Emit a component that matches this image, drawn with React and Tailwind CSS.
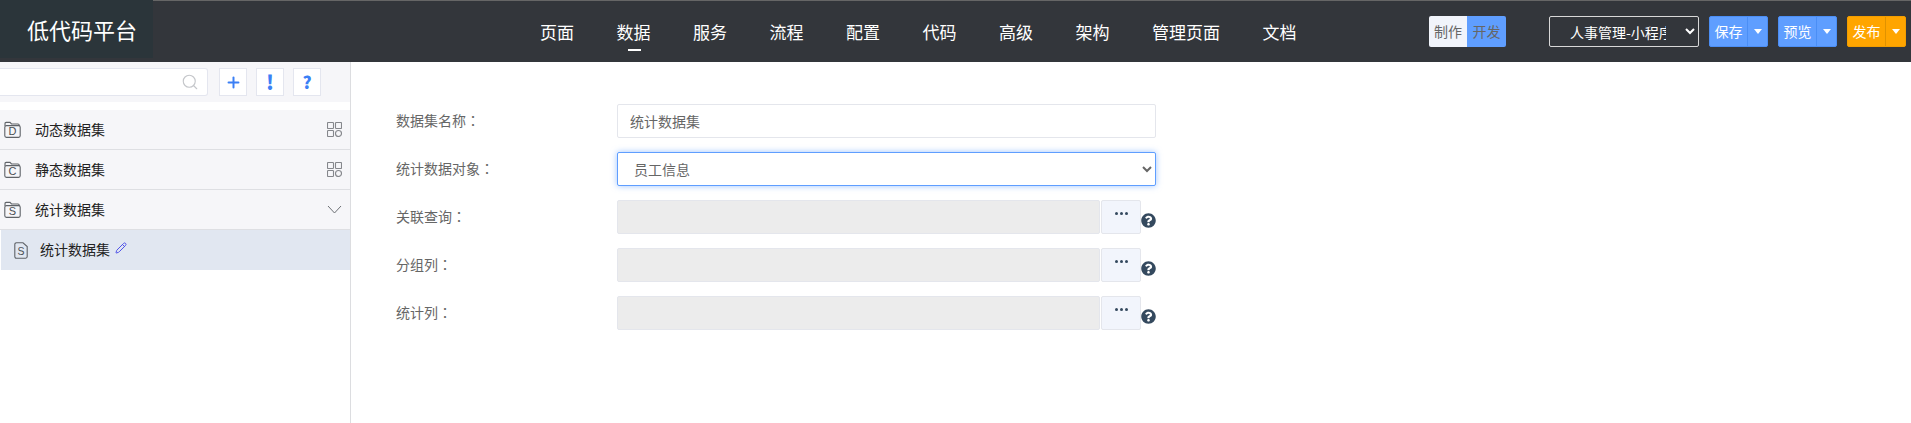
import { Search, Pencil, Plus } from "lucide-react";
import { FaQuestionCircle } from "react-icons/fa";

const NAV = ["页面", "数据", "服务", "流程", "配置", "代码", "高级", "架构", "管理页面", "文档"];
const FONT = "[font-family:'Noto_Sans_CJK_SC','Liberation_Sans',sans-serif]";

function FolderIcon({ letter }) {
  return (
    <svg width="17" height="17" viewBox="0 0 17 17" fill="none" stroke="#5f6368" strokeWidth="1.1">
      <path d="M1 5V2.6C1 1.9 1.5 1.4 2.2 1.4H6l1.5 1.6H14c.7 0 1.2.5 1.2 1.2V5" />
      <rect x="0.8" y="4.6" width="15.4" height="11.8" rx="1.6" />
      <text x="8.5" y="14.2" textAnchor="middle" fontSize="11" fill="#4b4f54" stroke="none" fontFamily="Liberation Sans">{letter}</text>
    </svg>
  );
}

function FileIcon({ letter }) {
  return (
    <svg width="14" height="17" viewBox="0 0 14 17" fill="none" stroke="#5f6368" strokeWidth="1.1">
      <path d="M2.4.8H9l4.2 3.8v10c0 .9-.6 1.6-1.5 1.6H2.4c-.9 0-1.6-.7-1.6-1.6V2.4c0-.9.7-1.6 1.6-1.6Z" />
      <text x="7" y="12.8" textAnchor="middle" fontSize="10.5" fill="#4b4f54" stroke="none" fontFamily="Liberation Sans">{letter}</text>
    </svg>
  );
}

function GridIcon() {
  return (
    <svg width="15" height="15" viewBox="0 0 15 15" fill="none" stroke="#85878c" strokeWidth="1.1">
      <rect x="0.5" y="0.5" width="6" height="6" rx="0.8" />
      <rect x="8.5" y="0.5" width="6" height="6" rx="0.8" />
      <rect x="0.5" y="8.5" width="6" height="6" rx="0.8" />
      <circle cx="11.5" cy="11.5" r="3" />
    </svg>
  );
}

function SplitButton({ label, cls, divider }) {
  return (
    <div className={`flex h-[31px] w-[59px] rounded-[2px] border text-[14px] text-white ${cls}`}>
      <span className={`flex w-[38px] items-center justify-center border-r ${divider}`}>{label}</span>
      <span className="flex flex-1 items-center justify-center">
        <span className="h-0 w-0 border-x-[4.5px] border-t-[5px] border-x-transparent border-t-white" />
      </span>
    </div>
  );
}

function TreeRow({ letter, label, open }) {
  return (
    <div className="flex h-10 items-center border-b border-[#dedfe3] bg-[#f6f6f9] pl-1 pr-2">
      <FolderIcon letter={letter} />
      <span className="ml-[14px] flex-1 pb-px text-[14px] text-[#222]">{label}</span>
      {open ? (
        <svg width="15" height="9" viewBox="0 0 15 9" fill="none" stroke="#6d7075" strokeWidth="1">
          <path d="M1 1l6.5 7L14 1" />
        </svg>
      ) : (
        <GridIcon />
      )}
    </div>
  );
}

function Field({ label, children }) {
  return (
    <div className="flex h-[34px] items-center">
      <label className="w-[221px] pb-[2px] text-[14px] text-[#666]">
        {label}
        <span className="[font-family:'Noto_Sans_CJK_TC',sans-serif]">：</span>
      </label>
      {children}
    </div>
  );
}

function LookupField({ label }) {
  return (
    <Field label={label}>
      <div className="h-full w-[483px] rounded-[2px] border border-[#e4e6ec] bg-[#ececec]" />
      <button className="ml-px flex h-full w-10 items-center justify-center gap-[2px] rounded-[2px] border border-[#e4e6ec] bg-[#f2f5fc] pb-[7px]">
        <span className="h-[3px] w-[3px] rounded-full bg-[#34495e]" />
        <span className="h-[3px] w-[3px] rounded-full bg-[#34495e]" />
        <span className="h-[3px] w-[3px] rounded-full bg-[#34495e]" />
      </button>
      <FaQuestionCircle size={15} color="#34495e" className="mt-[7px]" />
    </Field>
  );
}

export default function App() {
  return (
    <div className={`flex h-[423px] flex-col overflow-hidden bg-white ${FONT}`}>
      <header className="relative flex h-[62px] shrink-0 items-start border-t border-[#666] bg-[#33363b]">
        <div className="absolute -top-px left-0 flex h-[58px] w-[153px] items-center bg-[#2b353a] pl-[27px] text-[22px] text-white">
          低代码平台
        </div>
        <nav className="ml-[540px] flex h-full gap-[42.5px] text-[17px] text-white">
          {NAV.map((item) => (
            <div key={item} className="relative pt-[18px] leading-[26px]">
              {item}
              {item === "数据" && <span className="absolute top-[48px] left-[11px] h-[2px] w-[13px] bg-white" />}
            </div>
          ))}
        </nav>
        <div className="absolute top-[15px] left-[1429px] flex h-[31px] w-[77px] overflow-hidden rounded-[2px] text-[14px] leading-[31px] text-[#666]">
          <span className="w-[38px] bg-[#f1f4fb] text-center">制作</span>
          <span className="flex-1 bg-[#5f9eff] text-center">开发</span>
        </div>
        <select className="absolute top-[15px] left-[1549px] h-[31px] w-[150px] rounded-[2px] border border-[#d8d8d8] bg-[#33363b] pr-4 pl-4 text-[14px] text-white">
          <option>人事管理-小程序</option>
        </select>
        <div className="absolute top-[15px] left-[1709px] flex gap-[10px]">
          <SplitButton label="保存" cls="border-[#4b8ef5] bg-[#5f9eff]" divider="border-[#4b8ef5]" />
          <SplitButton label="预览" cls="border-[#4b8ef5] bg-[#5f9eff]" divider="border-[#4b8ef5]" />
          <SplitButton label="发布" cls="border-[#f29d00] bg-[#ffa500]" divider="border-[#e09200]" />
        </div>
      </header>

      <div className="flex flex-1">
        <aside className="w-[351px] shrink-0 border-r border-[#dcdde0]">
          <div className="flex h-10 items-start gap-[9px] bg-[#f6f6f9] pt-[6px] pl-0">
            <div className="mr-[2px] flex h-[28px] w-[208px] items-center justify-end rounded-r-[3px] border border-l-0 border-[#e4e6ef] bg-white pr-[8px]">
              <Search size={18} strokeWidth={1.5} color="#c4c6ca" />
            </div>
            <button className="flex h-[28px] w-[28px] items-center justify-center border border-[#e4e6ef] bg-white">
              <Plus size={17} strokeWidth={2.8} color="#3b7ff5" />
            </button>
            <button className="h-[28px] w-[28px] border border-[#e4e6ef] bg-white text-[20px] leading-[24px] font-black text-[#3b7ff5]">!</button>
            <button className="h-[28px] w-[28px] border border-[#e4e6ef] bg-white text-[17px] leading-[24px] font-black text-[#3b7ff5]">?</button>
          </div>
          <div className="mt-2">
            <TreeRow letter="D" label="动态数据集" />
            <TreeRow letter="C" label="静态数据集" />
            <TreeRow letter="S" label="统计数据集" open />
            <div className="ml-px flex h-10 items-center bg-[#e1e7f1] pl-[13px]">
              <FileIcon letter="S" />
              <span className="ml-[12px] pb-px text-[14px] text-[#222]">统计数据集</span>
              <Pencil size={12} strokeWidth={2} color="#4f52e8" className="mb-1 ml-[5px]" />
            </div>
          </div>
        </aside>

        <main className="flex flex-1 flex-col gap-[14px] pt-[42px] pl-[45px] text-[14px]">
          <Field label="数据集名称">
            <input
              readOnly
              value="统计数据集"
              className="h-full w-[539px] rounded-[2px] border border-[#e4e6ec] bg-white px-3 text-[#666] outline-none"
            />
          </Field>
          <Field label="统计数据对象">
            <select className="h-full w-[539px] rounded-[2px] border border-[#5f9eff] bg-white pl-3 text-[#666] shadow-[0_0_6px_rgba(95,158,255,0.6)] outline-none">
              <option>员工信息</option>
            </select>
          </Field>
          <LookupField label="关联查询" />
          <LookupField label="分组列" />
          <LookupField label="统计列" />
        </main>
      </div>
    </div>
  );
}
